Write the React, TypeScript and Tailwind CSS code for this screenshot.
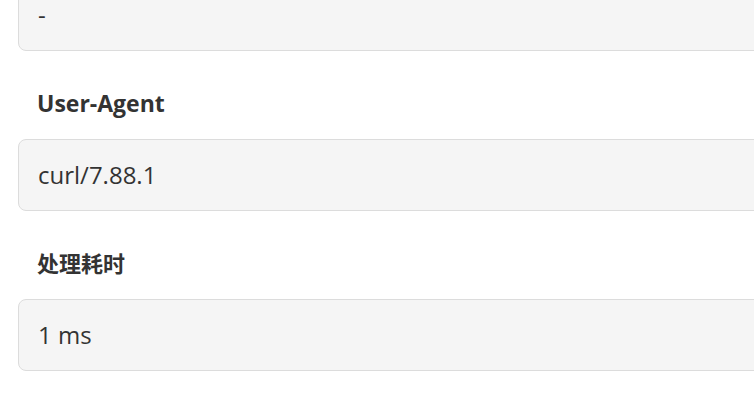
import React from 'react';

const fields = [
  { label: '', value: '-', cjk: false },
  { label: 'User-Agent', value: 'curl/7.88.1', cjk: false },
  { label: '处理耗时', value: '1 ms', cjk: true },
];

function Field({ label, value, cjk }: { label: string; value: string; cjk: boolean }) {
  return (
    <div>
      {label && (
        <div
          className={`pt-[36px] pb-[19px] pl-[19px] leading-[33px] font-bold text-[#333] ${
            cjk ? 'text-[22px]' : 'text-[23px]'
          }`}
        >
          {label}
        </div>
      )}
      <div className="h-[72px] flex items-center pl-[19px] bg-[#f5f5f5] border border-[#dcdcdc] rounded-[8px] text-[24px] leading-[26px] text-[#333]">
        <span>{value}</span>
      </div>
    </div>
  );
}

export default function App() {
  return (
    <div
      className="w-[754px] h-[415px] overflow-hidden bg-white"
      style={{ fontFamily: '"Open Sans", "Noto Sans CJK SC", sans-serif' }}
    >
      <div className="-mt-[21px] ml-[18px] -mr-[10px]">
        {fields.map((f, i) => (
          <Field key={i} label={f.label} value={f.value} cjk={f.cjk} />
        ))}
      </div>
    </div>
  );
}
